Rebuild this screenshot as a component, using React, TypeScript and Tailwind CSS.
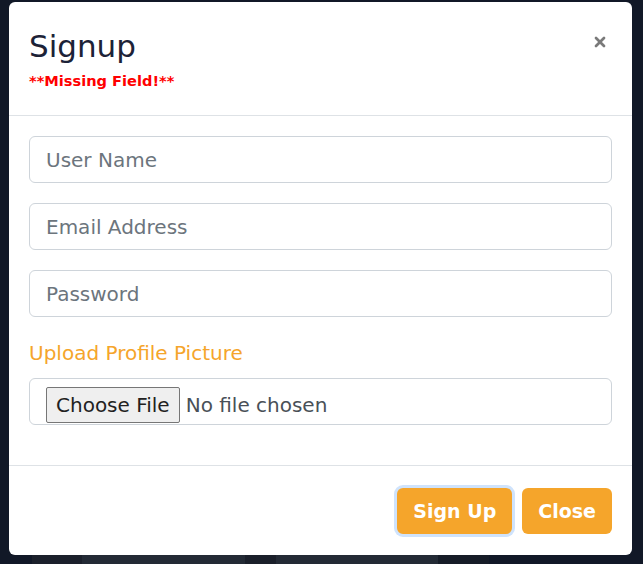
import { X } from "lucide-react";

const fields = ["User Name", "Email Address", "Password"];

export default function App() {
    return (
        <div className="relative h-[564px] w-full overflow-hidden bg-[#111827] font-['DejaVu_Sans',sans-serif]">
            {/* backdrop */}
            <div className="h-[555px]" />
            <div className="flex h-[9px]">
                <div className="w-[32px] bg-[#111827]" />
                <div className="w-[50px] bg-[#1b202b]" />
                <div className="w-[163px] bg-[#232a35]" />
                <div className="w-[31px] bg-[#1a1f2a]" />
                <div className="w-[162px] bg-[#232a35]" />
                <div className="w-[51px] bg-[#161c27]" />
                <div className="flex-1 bg-[#111827]" />
            </div>

            {/* modal */}
            <div className="absolute left-[9px] top-[2px] flex h-[553px] w-[623px] flex-col rounded-md bg-white">
                <div className="flex h-[114px] items-start justify-between border-b border-[#dee2e6] px-5 pt-[24px]">
                    <div>
                        <h3 className="text-[31px] leading-[40px] text-[#1c2237]">Signup</h3>
                        <p className="mt-[5px] text-[14.6px] font-bold leading-[20px] text-[#ff0000]">**Missing Field!**</p>
                    </div>
                    <button className="mr-[4px] mt-[8px] text-[#7a7a7a]">
                        <X size={16} strokeWidth={4} />
                    </button>
                </div>

                <form className="flex flex-col gap-5 border-b border-[#dee2e6] px-5 pb-[40px] pt-5">
                    {fields.map((f) => (
                        <input
                            key={f}
                            type="text"
                            placeholder={f}
                            className="h-[47px] w-full rounded-md border border-[#ced4da] px-4 text-[20px] text-[#495057] placeholder:text-[#6c757d] focus:outline-none"
                        />
                    ))}
                    <div className="flex flex-col gap-[11px]">
                        <label className="mt-[2px] text-[20px] leading-[28px] text-[#f5a52b]">Upload Profile Picture</label>
                        <div className="flex h-[47px] items-center gap-[6px] rounded-md border border-[#ced4da] px-4 pt-[6px]">
                            <span className="flex h-[36px] items-center rounded-[2px] border border-[#767676] bg-[#efefef] px-[9px] text-[20px] text-[#212121]">Choose File</span>
                            <span className="text-[20px] text-[#495057]">No file chosen</span>
                        </div>
                    </div>
                </form>

                <div className="flex flex-1 items-center justify-end gap-[10px] px-5 pt-[1px]">
                    <button className="h-[46px] rounded-md bg-[#f5a52b] px-4 text-[19px] font-bold text-white shadow-[0_0_0_3px_#cfe3fc]">Sign Up</button>
                    <button className="h-[46px] rounded-md bg-[#f5a52b] px-4 text-[19px] font-bold text-white">Close</button>
                </div>
            </div>
        </div>
    );
}
